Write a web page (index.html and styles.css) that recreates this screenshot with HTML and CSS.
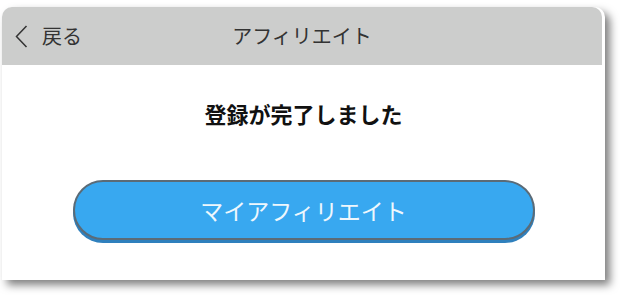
FILE: index.html
```html
<!DOCTYPE html>
<html lang="ja">
<head>
<meta charset="utf-8">
<link rel="stylesheet" href="styles.css">
</head>
<body>
<div class="phone">
  <header class="header">
    <div class="back">
      <svg class="chev" width="14" height="23" viewBox="0 0 14 23"><path d="M12.5 1 L2.5 11.5 L12.5 22" fill="none" stroke="#333" stroke-width="1.5"/></svg>
      <span class="back-text">戻る</span>
    </div>
    <div class="title">アフィリエイト</div>
    <div class="spacer"></div>
  </header>
  <main class="content">
    <p class="message">登録が完了しました</p>
    <button class="btn">マイアフィリエイト</button>
  </main>
</div>
</body>
</html>
```

FILE: styles.css
```css
html, body {
  margin: 0;
  padding: 0;
  background: #ffffff;
}
body {
  width: 627px;
  height: 299px;
  overflow: hidden;
  font-family: "Noto Sans CJK JP", "Noto Sans", sans-serif;
}
.phone {
  margin: 7px 0 0 2px;
  width: 603px;
  height: 273px;
  background: #ffffff;
  border-radius: 10px 10px 0 0;
  box-shadow: 5px 5px 9px rgba(0, 0, 0, 0.5);
}
.header {
  margin-right: 3px;
  height: 58px;
  background: #cccdcc;
  border-radius: 10px 10px 0 0;
  display: grid;
  grid-template-columns: 1fr auto 1fr;
  align-items: center;
  color: #333;
}
.back {
  display: flex;
  align-items: center;
  padding-left: 12px;
  gap: 14px;
}
.chev {
  display: block;
}
.back-text {
  font-size: 20px;
  line-height: 24px;
}
.title {
  font-size: 20px;
  line-height: 24px;
}
.content {
  display: flex;
  flex-direction: column;
  align-items: center;
}
.message {
  margin: 33px 0 0 0;
  font-size: 22px;
  line-height: 30px;
  font-weight: bold;
  color: #111;
}
.btn {
  margin-top: 52px;
  width: 462px;
  height: 60px;
  border: 2px solid #5b6b77;
  border-radius: 30px;
  background: #38a8f0;
  box-shadow: 0 3px 0 #2f80bd;
  color: #eef7fd;
  font-family: "Noto Sans CJK JP", "Noto Sans", sans-serif;
  font-size: 23px;
  padding: 0;
}
```
